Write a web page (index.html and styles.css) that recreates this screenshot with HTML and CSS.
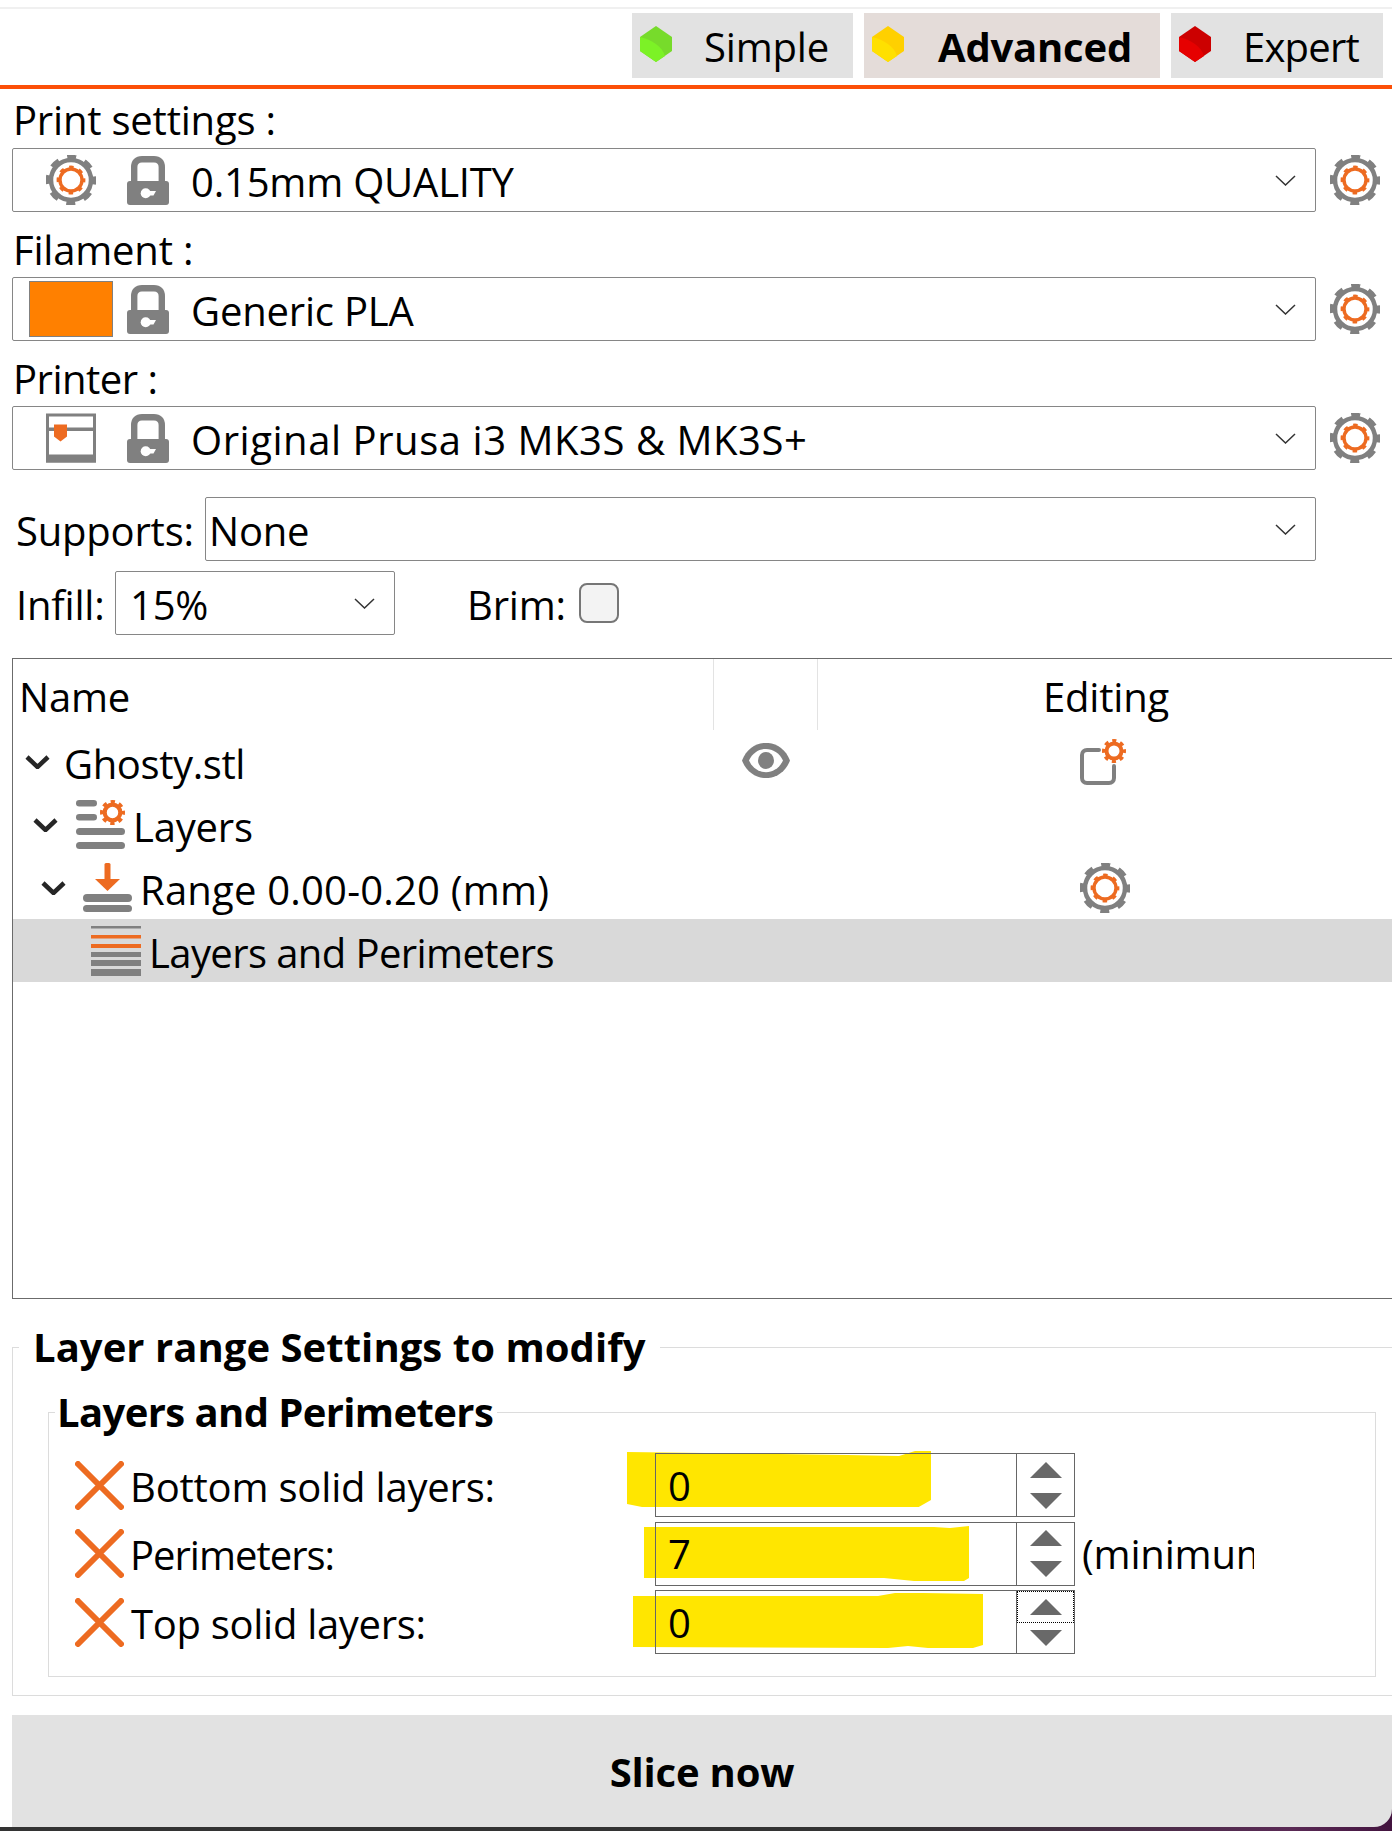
FILE: index.html
```html
<!DOCTYPE html>
<html lang="en">
<head>
    <meta charset="UTF-8">
    <title>PrusaSlicer sidebar</title>
    <link rel="stylesheet" href="styles.css">
</head>
<body>
    <svg class="defs" width="0" height="0">
        <symbol id="gear" viewBox="0 0 50 50">
            <circle cx="25" cy="25" r="20" fill="none" stroke="#808080" stroke-width="4.5"/>
            <circle cx="25" cy="25" r="23" fill="none" stroke="#808080" stroke-width="4.5" stroke-dasharray="9 9.06" stroke-dashoffset="4.5"/>
            <circle cx="25" cy="25" r="11" fill="none" stroke="#ed6b21" stroke-width="3.4"/>
            <circle cx="25" cy="25" r="13" fill="none" stroke="#ed6b21" stroke-width="2.8" stroke-dasharray="4.5 5.71" stroke-dashoffset="2.25"/>
        </symbol>
        <symbol id="small-gear" viewBox="0 0 24 24">
            <circle cx="12" cy="12" r="7.5" fill="none" stroke="#ed6b21" stroke-width="4"/>
            <circle cx="12" cy="12" r="10" fill="none" stroke="#ed6b21" stroke-width="4" stroke-dasharray="4 3.85" stroke-dashoffset="2"/>
        </symbol>
        <symbol id="lock" viewBox="0 0 42 49">
            <path d="M7.2 26V11C7.2 6 10 3.2 15 3.2H27C32 3.2 34.8 6 34.8 11V26" fill="none" stroke="#808080" stroke-width="6.4"/>
            <rect x="0" y="25" width="42" height="24" rx="3" fill="#808080"/>
            <circle cx="18.7" cy="37.3" r="5" fill="#fff"/>
            <path d="M20 35H29L26.5 39.5H20Z" fill="#fff"/>
        </symbol>
        <symbol id="hex-green" viewBox="0 0 32 36">
            <path d="M16 0L32 11V25L16 36L0 25V11Z" fill="#77db2b"/>
            <path d="M0 11C12 14 22 20 25 30L16 36L0 25Z" fill="#7cf226"/>
        </symbol>
        <symbol id="hex-yellow" viewBox="0 0 32 36">
            <path d="M16 0L32 11V25L16 36L0 25V11Z" fill="#ffd000"/>
            <path d="M0 11C12 14 22 20 25 30L16 36L0 25Z" fill="#ffe000"/>
        </symbol>
        <symbol id="hex-red" viewBox="0 0 32 36">
            <path d="M16 0L32 11V25L16 36L0 25V11Z" fill="#cc0000"/>
            <path d="M0 11C12 14 22 20 25 30L16 36L0 25Z" fill="#e60000"/>
        </symbol>
        <symbol id="chevron" viewBox="0 0 21 11">
            <path d="M1 1L10.5 10L20 1" fill="none" stroke="#333" stroke-width="1.5"/>
        </symbol>
        <symbol id="tree-chevron" viewBox="0 0 25 14">
            <path d="M2 2L12.5 12L23 2" fill="none" stroke="#262626" stroke-width="4.5"/>
        </symbol>
        <symbol id="cross" viewBox="0 0 49 49">
            <path d="M3 3L46 46M46 3L3 46" fill="none" stroke="#ed6b21" stroke-width="6" stroke-linecap="round"/>
        </symbol>
    </svg>

    <div class="top-line"></div>
    <div class="modes">
        <div class="mode mode-simple">
            <svg class="hex"><use href="#hex-green"/></svg>
            <span class="mode-name">Simple</span>
        </div>
        <div class="mode mode-advanced active">
            <svg class="hex"><use href="#hex-yellow"/></svg>
            <span class="mode-name">Advanced</span>
        </div>
        <div class="mode mode-expert">
            <svg class="hex"><use href="#hex-red"/></svg>
            <span class="mode-name">Expert</span>
        </div>
    </div>
    <div class="accent-line"></div>

    <div class="preset">
        <div class="preset-label">Print settings :</div>
        <div class="preset-row">
            <div class="combo">
                <span class="slot"><svg class="icon-50"><use href="#gear"/></svg></span>
                <svg class="lock"><use href="#lock"/></svg>
                <span class="combo-text">0.15mm QUALITY</span>
                <svg class="chevron"><use href="#chevron"/></svg>
            </div>
            <svg class="icon-50 preset-gear"><use href="#gear"/></svg>
        </div>
    </div>
    <div class="preset">
        <div class="preset-label">Filament :</div>
        <div class="preset-row">
            <div class="combo">
                <span class="slot"><span class="swatch"></span></span>
                <svg class="lock"><use href="#lock"/></svg>
                <span class="combo-text">Generic PLA</span>
                <svg class="chevron"><use href="#chevron"/></svg>
            </div>
            <svg class="icon-50 preset-gear"><use href="#gear"/></svg>
        </div>
    </div>
    <div class="preset">
        <div class="preset-label label-printer">Printer :</div>
        <div class="preset-row">
            <div class="combo">
                <span class="slot">
                    <svg class="icon-50" viewBox="0 0 50 49">
                        <rect x="1.5" y="1.5" width="47" height="46" fill="none" stroke="#808080" stroke-width="3"/>
                        <rect x="0" y="14" width="50" height="3.5" fill="#808080"/>
                        <rect x="0" y="41" width="50" height="8" fill="#808080"/>
                        <path d="M8 11H21V23L14.5 28L8 23Z" fill="#ed6b21"/>
                    </svg>
                </span>
                <svg class="lock"><use href="#lock"/></svg>
                <span class="combo-text text-printer">Original Prusa i3 MK3S &amp; MK3S+</span>
                <svg class="chevron"><use href="#chevron"/></svg>
            </div>
            <svg class="icon-50 preset-gear"><use href="#gear"/></svg>
        </div>
    </div>

    <div class="supports-row">
        <span class="field-label label-supports">Supports:</span>
        <div class="combo combo-supports">
            <span class="combo-text">None</span>
            <svg class="chevron"><use href="#chevron"/></svg>
        </div>
    </div>
    <div class="infill-row">
        <span class="field-label label-infill">Infill:</span>
        <div class="combo combo-infill">
            <span class="combo-text">15%</span>
            <svg class="chevron"><use href="#chevron"/></svg>
        </div>
        <span class="field-label label-brim">Brim:</span>
        <span class="checkbox"></span>
    </div>

    <div class="tree">
        <div class="tree-head">
            <div class="head-cell">Name</div>
            <div class="head-cell head-eye"></div>
            <div class="head-cell head-editing">Editing</div>
        </div>
        <div class="tree-row">
            <div class="tree-name level-0">
                <svg class="tree-chevron"><use href="#tree-chevron"/></svg>
                <span class="node-text name-object">Ghosty.stl</span>
            </div>
            <div class="tree-eye">
                <svg class="eye" viewBox="0 0 48 35">
                    <path d="M0 17.5C9 -6 39 -6 48 17.5C39 41 9 41 0 17.5Z" fill="#808080"/>
                    <path d="M7 17.5C14 2 34 2 41 17.5C34 33 14 33 7 17.5Z" fill="#fff"/>
                    <ellipse cx="24" cy="17.5" rx="8" ry="8.5" fill="#808080"/>
                </svg>
            </div>
            <div class="tree-edit">
                <svg class="edit-icon" viewBox="0 0 46 46">
                    <path d="M19 11H7C4 11 2 13 2 16V39C2 42 4 44 7 44H29C32 44 34 42 34 39V27" fill="none" stroke="#808080" stroke-width="4" stroke-linecap="round"/>
                    <use href="#small-gear" x="22" y="0" width="24" height="24"/>
                </svg>
            </div>
        </div>
        <div class="tree-row">
            <div class="tree-name level-1">
                <svg class="tree-chevron"><use href="#tree-chevron"/></svg>
                <svg class="node-icon" viewBox="0 0 49 49">
                    <rect x="0" y="0" width="21" height="6.5" rx="3.2" fill="#808080"/>
                    <rect x="0" y="14" width="21" height="6.5" rx="3.2" fill="#808080"/>
                    <rect x="0" y="28" width="49" height="7" rx="3.5" fill="#808080"/>
                    <rect x="0" y="42" width="49" height="7" rx="3.5" fill="#808080"/>
                    <use href="#small-gear" x="24" y="0" width="25" height="25"/>
                </svg>
                <span class="node-text">Layers</span>
            </div>
            <div class="tree-eye"></div>
            <div class="tree-edit"></div>
        </div>
        <div class="tree-row">
            <div class="tree-name level-2">
                <svg class="tree-chevron"><use href="#tree-chevron"/></svg>
                <svg class="node-icon" viewBox="0 0 49 49">
                    <rect x="21.5" y="0" width="6" height="17" rx="1.5" fill="#ed6b21"/>
                    <path d="M12 16H37L24.5 28Z" fill="#ed6b21"/>
                    <rect x="0" y="31" width="49" height="8" rx="4" fill="#808080"/>
                    <rect x="0" y="42" width="49" height="7" rx="3.5" fill="#808080"/>
                </svg>
                <span class="node-text text-range">Range 0.00-0.20 (mm)</span>
            </div>
            <div class="tree-eye"></div>
            <div class="tree-edit">
                <svg class="icon-50"><use href="#gear"/></svg>
            </div>
        </div>
        <div class="tree-row selected">
            <div class="tree-name level-3">
                <svg class="node-icon" viewBox="0 0 50 50">
                    <rect x="0" y="0" width="50" height="2.5" fill="#808080"/>
                    <rect x="0" y="9" width="50" height="3.5" fill="#ed6b21"/>
                    <rect x="0" y="18" width="50" height="4" fill="#ed6b21"/>
                    <rect x="0" y="26" width="50" height="5" fill="#808080"/>
                    <rect x="0" y="34" width="50" height="6" fill="#808080"/>
                    <rect x="0" y="43" width="50" height="7" fill="#808080"/>
                </svg>
                <span class="node-text text-selected">Layers and Perimeters</span>
            </div>
            <div class="tree-eye"></div>
            <div class="tree-edit"></div>
        </div>
    </div>

    <fieldset class="group-outer">
        <legend>Layer range Settings to modify</legend>
        <fieldset class="group-inner">
            <legend>Layers and Perimeters</legend>
            <div class="option">
                <svg class="mark mark-1" viewBox="0 0 304 58">
                    <path d="M0 3L220 6L272 7L288 2H304V51L290 59H215L190 58L15 58L0 55Z" fill="#ffe600"/>
                </svg>
                <svg class="cross"><use href="#cross"/></svg>
                <span class="option-label">Bottom solid layers:</span>
                <div class="spin">
                    <span class="spin-value">0</span>
                    <div class="spin-btns">
                        <span class="spin-btn"><i class="arrow-up"></i></span>
                        <span class="spin-btn"><i class="arrow-down"></i></span>
                    </div>
                </div>
            </div>
            <div class="option">
                <svg class="mark mark-2" viewBox="0 0 325 56">
                    <path d="M0 1H290L306 2L325 0V52L320 55H270L240 52H0Z" fill="#ffe600"/>
                </svg>
                <svg class="cross"><use href="#cross"/></svg>
                <span class="option-label label-perimeters">Perimeters:</span>
                <div class="spin">
                    <span class="spin-value">7</span>
                    <div class="spin-btns">
                        <span class="spin-btn"><i class="arrow-up"></i></span>
                        <span class="spin-btn"><i class="arrow-down"></i></span>
                    </div>
                </div>
                <span class="option-side">(minimum</span>
            </div>
            <div class="option">
                <svg class="mark mark-3" viewBox="0 0 350 56">
                    <path d="M0 3H245L262 0H290L350 1V52L340 55H295L275 53L255 55L0 54Z" fill="#ffe600"/>
                </svg>
                <svg class="cross"><use href="#cross"/></svg>
                <span class="option-label label-top">Top solid layers:</span>
                <div class="spin">
                    <span class="spin-value">0</span>
                    <div class="spin-btns">
                        <span class="spin-btn focused"><i class="arrow-up"></i></span>
                        <span class="spin-btn"><i class="arrow-down"></i></span>
                    </div>
                </div>
            </div>
        </fieldset>
    </fieldset>

    <div class="slice-wrap">
        <button class="slice-btn">Slice now</button>
    </div>
    <div class="taskbar"></div>
</body>
</html>
```

FILE: styles.css
```css
html, body {
    margin: 0;
    padding: 0;
}

body {
    width: 1392px;
    height: 1831px;
    overflow: hidden;
    background: #fff;
    color: #000;
    font-family: "Open Sans", "Liberation Sans", sans-serif;
    font-size: 40px;
    letter-spacing: -0.2px;
}

.defs {
    position: absolute;
}

svg {
    display: block;
    flex: none;
}

/* mode tabs */
.top-line {
    height: 2px;
    margin-top: 7px;
    background: #f0f0f0;
}

.modes {
    display: flex;
    justify-content: flex-end;
    gap: 11px;
    height: 65px;
    margin-top: 4px;
    padding-right: 9px;
}

.mode {
    display: flex;
    align-items: center;
    background: #e2e2e2;
    padding-left: 8px;
}

.mode-simple {
    width: 213px;
}

.mode-advanced {
    width: 288px;
    background: #e4dcd9;
}

.mode-expert {
    width: 204px;
}

.mode-expert .mode-name {
    letter-spacing: -0.8px;
}

.hex {
    width: 32px;
    height: 36px;
    margin-top: -4px;
}

.mode-name {
    margin-left: 32px;
    padding-top: 2px;
}

.mode-advanced .mode-name {
    margin-left: 34px;
    font-weight: 700;
}

.accent-line {
    height: 4px;
    margin-top: 7px;
    background: #fc4f07;
}

/* presets */
.preset {
    padding-left: 12px;
}

.preset + .preset {
    margin-top: 6px;
}

.preset-label {
    display: flex;
    align-items: center;
    box-sizing: border-box;
    height: 59px;
    padding: 2px 0 0 1px;
}

.preset + .preset .preset-label {
    padding-top: 4px;
}

.preset + .preset .label-printer {
    letter-spacing: -0.5px;
}

.preset-row {
    display: flex;
    align-items: center;
    gap: 14px;
}

.combo {
    display: flex;
    align-items: center;
    box-sizing: border-box;
    width: 1304px;
    height: 64px;
    border: 1px solid #868686;
    border-radius: 2px;
    padding-right: 19px;
}

.slot {
    display: flex;
    align-items: center;
    justify-content: center;
    width: 84px;
    margin-left: 16px;
}

.icon-50 {
    width: 50px;
    height: 50px;
}

.lock {
    width: 42px;
    height: 49px;
    margin-left: 14px;
}

.combo-text {
    margin-left: 22px;
    padding-top: 2px;
}

.text-printer {
    letter-spacing: 0.55px;
}

.chevron {
    width: 21px;
    height: 11px;
    margin-left: auto;
}

.swatch {
    box-sizing: border-box;
    width: 84px;
    height: 56px;
    background: #ff8000;
    border: 1px solid #808080;
}

/* supports, infill */
.supports-row,
.infill-row {
    display: flex;
    align-items: center;
    padding-left: 16px;
}

.supports-row {
    margin-top: 27px;
}

.infill-row {
    margin-top: 10px;
}

.field-label {
    flex: none;
    padding-top: 2px;
    white-space: nowrap;
}

.label-supports {
    width: 189px;
}

.label-infill {
    width: 99px;
}

.label-brim {
    width: 112px;
    margin-left: 72px;
}

.combo-supports {
    width: 1111px;
}

.combo-supports .combo-text {
    margin-left: 3px;
}

.combo-infill {
    width: 280px;
}

.combo-infill .combo-text {
    margin-left: 14px;
}

.checkbox {
    box-sizing: border-box;
    width: 40px;
    height: 40px;
    background: #f3f3f3;
    border: 2px solid #767676;
    border-radius: 8px;
}

/* object tree */
.tree {
    box-sizing: border-box;
    width: 1390px;
    height: 641px;
    margin: 23px 0 0 12px;
    border: 1px solid #6b6b6b;
}

.tree-head,
.tree-row {
    display: grid;
    grid-template-columns: 700px 105px 1fr;
}

.tree-head {
    height: 71px;
}

.head-cell {
    display: flex;
    align-items: center;
    padding: 4px 0 0 6px;
}

.head-eye {
    border-left: 1px solid #e3e3e3;
    border-right: 1px solid #e3e3e3;
}

.head-editing {
    justify-content: center;
    padding: 4px 7px 0 0;
}

.tree-row {
    height: 63px;
}

.tree-row.selected {
    background: #d9d9d9;
}

.tree-name {
    display: flex;
    align-items: center;
}

.tree-chevron {
    width: 25px;
    height: 14px;
}

.level-0 {
    padding-left: 12px;
}

.level-1 {
    padding-left: 20px;
}

.level-2 {
    padding-left: 28px;
}

.level-3 {
    padding-left: 78px;
}

.node-icon {
    width: 49px;
    height: 49px;
    margin-left: 18px;
}

.level-2 .node-icon {
    margin-left: 17px;
}

.level-3 .node-icon {
    margin-left: 0;
    width: 50px;
    height: 50px;
}

.node-text {
    margin-left: 8px;
    padding-top: 4px;
}

.name-object {
    margin-left: 14px;
    letter-spacing: -0.4px;
}

.text-range {
    letter-spacing: 0.2px;
}

.level-3 .node-text {
    margin-left: 8px;
}

.text-selected {
    letter-spacing: -0.6px;
}

.tree-eye,
.tree-edit {
    display: flex;
    align-items: center;
    justify-content: center;
}

.tree-edit {
    padding-right: 9px;
}

.eye {
    width: 48px;
    height: 35px;
    margin-top: -2px;
}

.edit-icon {
    width: 46px;
    height: 46px;
    margin: 0 4px 0 0;
}

/* settings groups */
fieldset {
    margin: 0;
    padding: 0;
    min-width: 0;
    border: 1px solid #dcdcdc;
}

legend {
    font-weight: 700;
    line-height: 54px;
}

.group-outer {
    box-sizing: border-box;
    width: 1390px;
    height: 376px;
    margin: 21px 0 0 12px;
    border-right: 0;
}

.group-outer > legend {
    margin-left: 6px;
    padding: 0 14px 0 14px;
    letter-spacing: 0.05px;
}

.group-inner {
    box-sizing: border-box;
    width: 1328px;
    height: 292px;
    margin: 11px 0 0 35px;
    padding-top: 14px;
}

.group-inner > legend {
    margin-left: 6px;
    padding: 0 4px 0 2px;
    letter-spacing: -0.6px;
}

.option {
    position: relative;
    display: flex;
    align-items: center;
    height: 64px;
    margin-left: 26px;
    margin-bottom: 4.5px;
}

.cross {
    width: 49px;
    height: 49px;
}

.option-label {
    width: 531px;
    flex: none;
    padding: 2px 0 0 6px;
    box-sizing: border-box;
}

.label-perimeters {
    letter-spacing: -1px;
}

.label-top {
    padding-left: 7px;
    letter-spacing: -0.3px;
}

.spin {
    position: relative;
    display: flex;
    box-sizing: border-box;
    width: 420px;
    height: 64px;
    border: 1px solid #666;
}

.spin-value {
    flex: 1;
    display: flex;
    align-items: center;
    padding-left: 12px;
}

.spin-btns {
    display: flex;
    flex-direction: column;
    width: 57px;
    border-left: 1px solid #666;
}

.spin-btn {
    flex: 1;
    display: flex;
    align-items: center;
    justify-content: center;
    box-sizing: border-box;
}

.spin-btn.focused {
    border: 1px dotted #000;
}

.arrow-up,
.arrow-down {
    width: 0;
    height: 0;
    border-left: 16px solid transparent;
    border-right: 16px solid transparent;
}

.arrow-up {
    border-bottom: 16px solid #696969;
}

.arrow-down {
    border-top: 16px solid #696969;
}

.option-side {
    width: 172px;
    margin-left: 7px;
    overflow: hidden;
    white-space: nowrap;
}

/* highlighter strokes sit under the input boxes */
.mark {
    position: absolute;
}

.mark-1 {
    left: 552px;
    top: -4px;
    width: 304px;
    height: 58px;
}

.mark-2 {
    left: 569px;
    top: 4px;
    width: 325px;
    height: 56px;
}

.mark-3 {
    left: 558px;
    top: 3px;
    width: 350px;
    height: 56px;
}

/* slice button */
.slice-wrap {
    margin: 19px 0 0 12px;
    background: linear-gradient(to top, #43143f 18px, transparent 18px);
}

.slice-btn {
    display: block;
    width: 100%;
    height: 112px;
    border: none;
    border-radius: 0 0 18px 0;
    background: #e2e2e2;
    color: #000;
    font: inherit;
    font-weight: 700;
    letter-spacing: inherit;
}

.taskbar {
    height: 4px;
    background: linear-gradient(to right, #333 900px, #5a2a55 1290px, #43143f 1392px);
}
```
